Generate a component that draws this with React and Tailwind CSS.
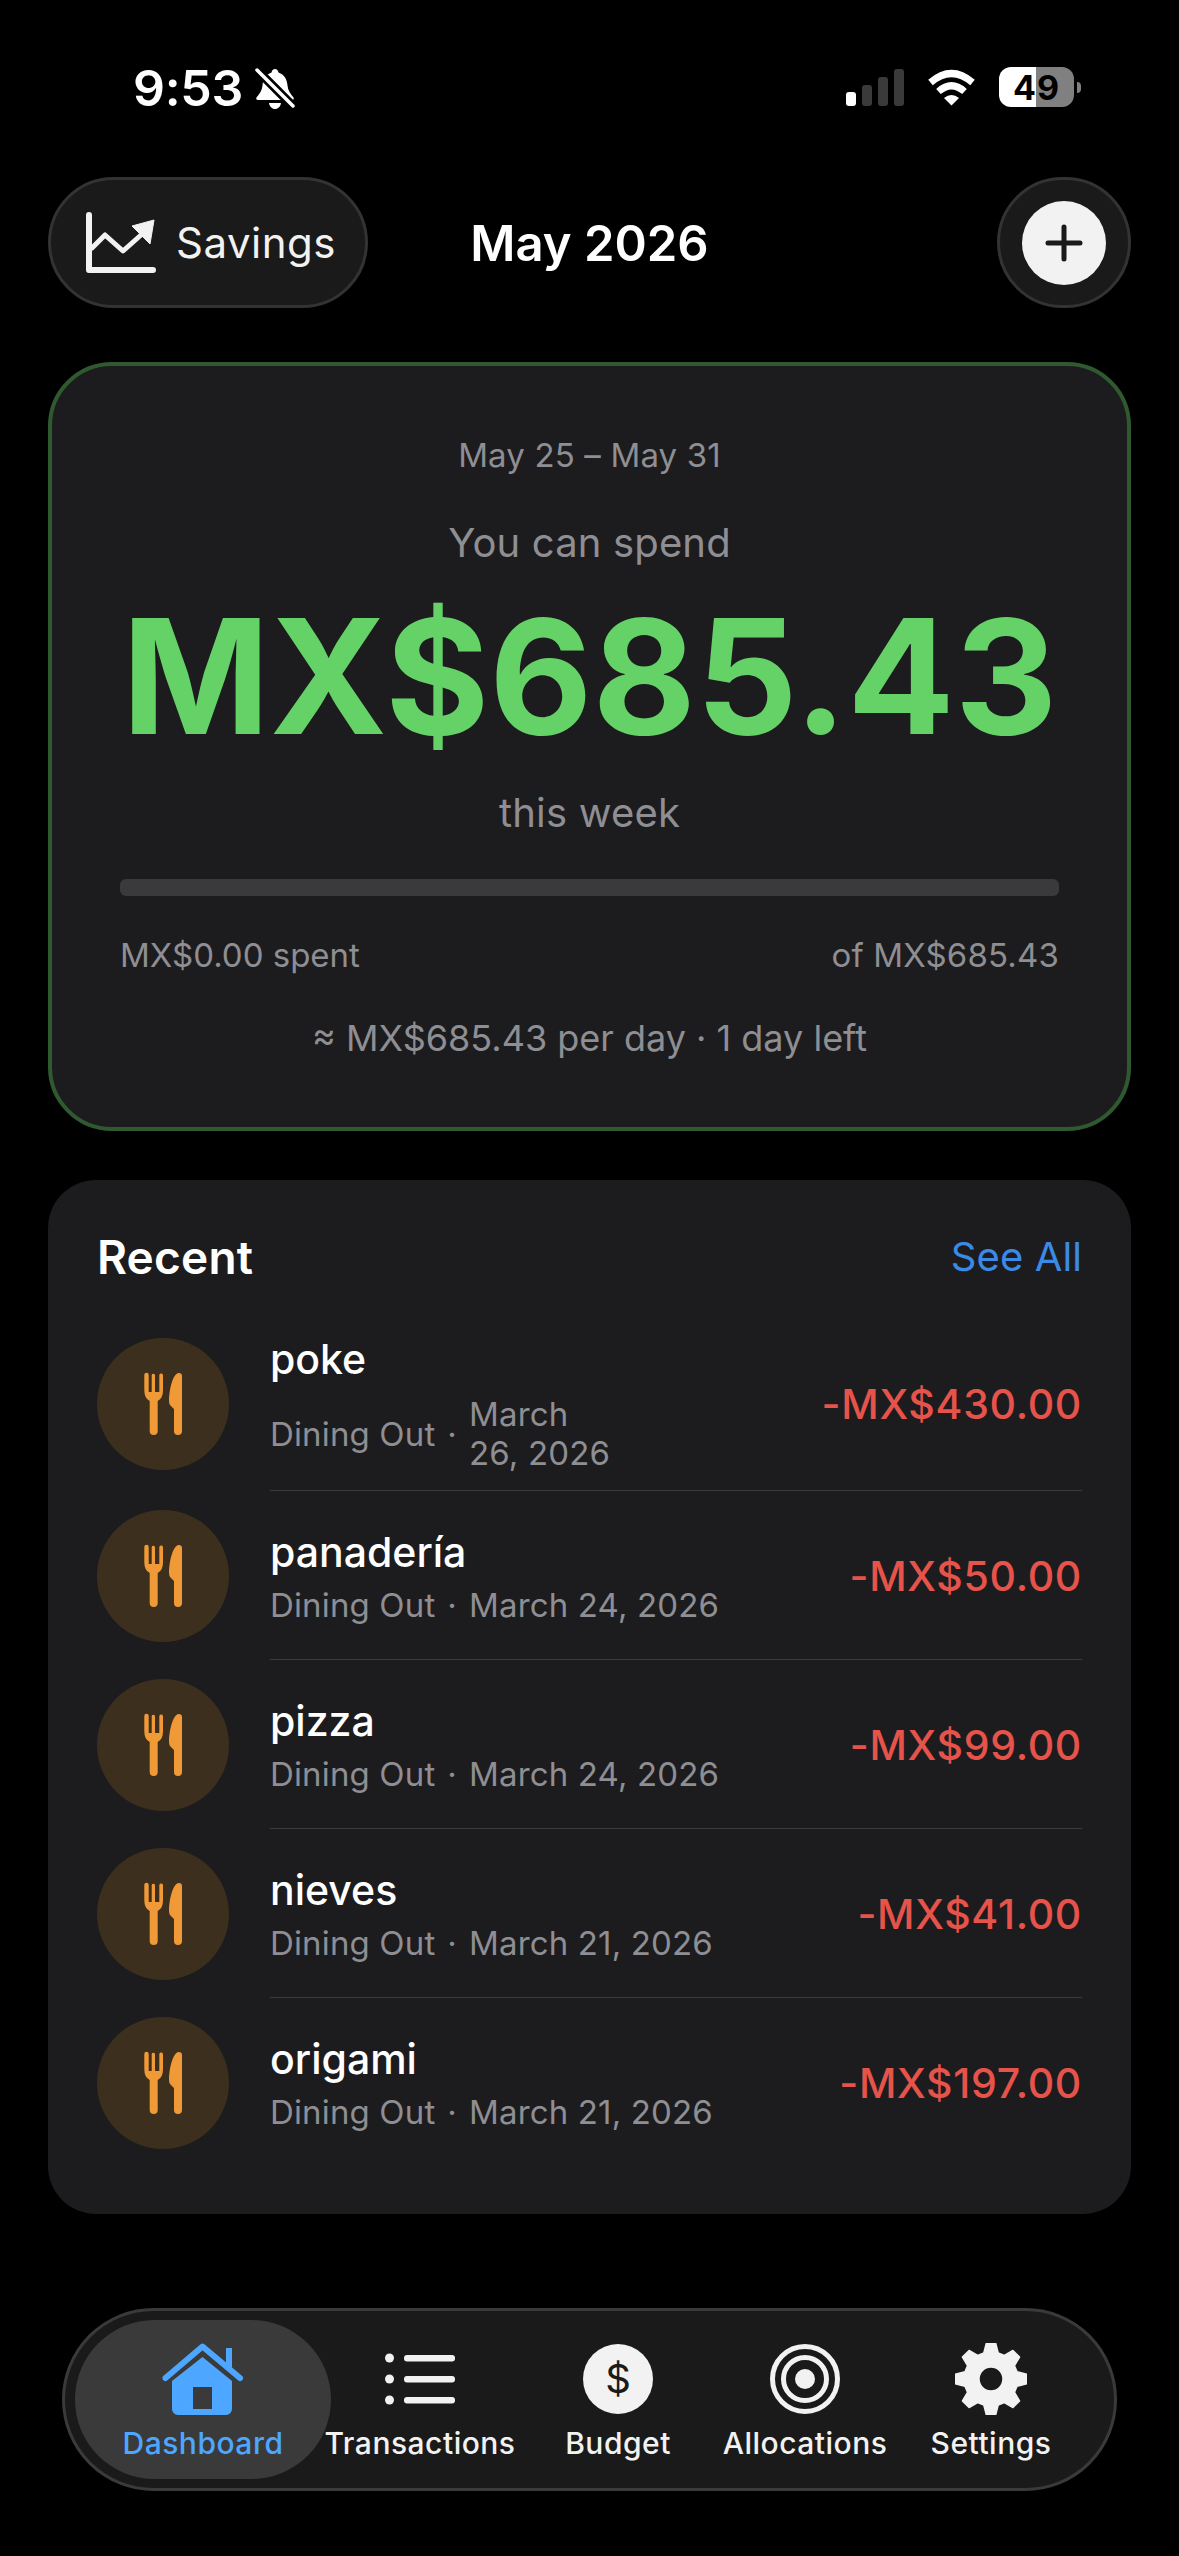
const ROWS = [
  { name: 'poke', date: ['March', '26, 2026'], amount: '-MX$430.00' },
  { name: 'panadería', date: ['March 24, 2026'], amount: '-MX$50.00' },
  { name: 'pizza', date: ['March 24, 2026'], amount: '-MX$99.00' },
  { name: 'nieves', date: ['March 21, 2026'], amount: '-MX$41.00' },
  { name: 'origami', date: ['March 21, 2026'], amount: '-MX$197.00' },
]

function Bell() {
  return (
    <svg width="40" height="42" viewBox="0 0 40 42" className="ml-[12px] mt-[1px]">
      <path d="M20 1c2 0 3 1.500 3.500 3.500 6 2 8.500 7 9 13 .4 5 3 8.500 6 12 .8 1.500 0 2.500-1.500 2.500H3c-1.500 0-2.300-1-1.500-2.500 3-3.500 5.600-7 6-12 .5-6 3-11 9-13C17 2.500 18 1 20 1z" fill="#fff" />
      <path d="M14 35h12c-.5 3.500-3 6-6 6s-5.500-2.500-6-6z" fill="#fff" />
      <path d="M3 3l35 35" stroke="#000" strokeWidth="9" />
      <path d="M2 2l36 36" stroke="#fff" strokeWidth="3.500" strokeLinecap="round" />
    </svg>
  )
}

function StatusBar() {
  return (
    <div className="flex h-[177px] items-start justify-between pl-[133px] pr-[98px] pt-[67px]">
      <div className="flex items-start">
        <span className="text-[50px] font-semibold leading-[42px] tracking-[-0.3px] text-white">9:53</span>
        <Bell />
      </div>
      <div className="flex items-center">
        <div className="flex h-[40px] items-end gap-[6px] pb-[1px]">
          <div className="h-[14px] w-[10px] rounded-[3px] bg-white" />
          <div className="h-[21px] w-[10px] rounded-[3px] bg-[#3a3a3a]" />
          <div className="h-[29px] w-[10px] rounded-[3px] bg-[#3a3a3a]" />
          <div className="h-[37px] w-[10px] rounded-[3px] bg-[#3a3a3a]" />
        </div>
        <svg width="49" height="38" viewBox="0 0 49 38" className="ml-[23px]">
          <path d="M3.500 14.500Q24.500 -3.500 45.500 14.500" fill="none" stroke="#fff" strokeWidth="7" />
          <path d="M11.500 23.500Q24.500 12 37.500 23.500" fill="none" stroke="#fff" strokeWidth="7" />
          <path d="M17 30Q24.500 24 32 30L24.500 37.500z" fill="#fff" />
        </svg>
        <div className="ml-[23px] flex h-[40px] w-[75px] items-center justify-center rounded-[12px] bg-[linear-gradient(90deg,#fff_49%,#808080_49%)] text-[34px] font-bold tracking-[1px] text-black">
          49
        </div>
        <div className="ml-[3px] h-[11px] w-[4px] rounded-r-full bg-[#808080]" />
      </div>
    </div>
  )
}

function SavingsIcon() {
  return (
    <svg width="70" height="62" viewBox="0 0 70 62">
      <path d="M3 3V58H67" fill="none" stroke="#f2f2f2" strokeWidth="6" strokeLinecap="round" strokeLinejoin="round" />
      <path d="M5 37L19 23L37 39L55 23" fill="none" stroke="#f2f2f2" strokeWidth="5" strokeLinejoin="round" />
      <path d="M68 8L46 14L64 32z" fill="#f2f2f2" stroke="#f2f2f2" strokeWidth="1" strokeLinejoin="round" />
    </svg>
  )
}

function Header() {
  return (
    <div className="mx-[48px] grid h-[131px] grid-cols-[1fr_auto_1fr] items-center">
      <div className="flex h-[131px] w-[320px] items-center gap-[20px] rounded-full border-[3px] border-[#333] bg-[#1a1a1a] pl-[35px]">
        <SavingsIcon />
        <span className="text-[42px] leading-none tracking-[0.5px] text-[#f2f2f2]">Savings</span>
      </div>
      <h1 className="mt-[2px] text-[49px] font-semibold leading-none text-white">May 2026</h1>
      <div className="flex justify-end">
        <div className="flex h-[131px] w-[134px] items-center justify-center rounded-full border-[3px] border-[#333] bg-[#1a1a1a]">
          <div className="flex h-[84px] w-[84px] items-center justify-center rounded-full bg-[#f2f2f2]">
            <svg width="38" height="38" viewBox="0 0 38 38">
              <path d="M19 3V35M3 19H35" stroke="#1a1a1a" strokeWidth="5" strokeLinecap="round" />
            </svg>
          </div>
        </div>
      </div>
    </div>
  )
}

function BudgetCard() {
  return (
    <div className="mx-[48px] mt-[54px] flex h-[769px] flex-col items-center rounded-[64px] border-[4px] border-[#2f5a30] bg-[#1c1c1e] px-[68px] pt-[69px] text-[#8e8e93]">
      <p className="text-[33px] leading-[40px] tracking-[0.15px]">May 25 – May 31</p>
      <p className="mt-[42px] text-[40px] leading-[52px] tracking-[0.15px]">You can spend</p>
      <p className="mt-[27px] whitespace-nowrap text-[159px] font-bold leading-[160px] text-[#65d268]">MX$685.43</p>
      <p className="mt-[31px] text-[40px] leading-[52px] tracking-[0.2px]">this week</p>
      <div className="mt-[40px] h-[17px] w-full rounded-[6px] bg-[#3a3a3c]" />
      <div className="mt-[39px] flex w-full justify-between text-[33px] leading-[40px]">
        <span>MX$0.00 spent</span>
        <span className="tracking-[0.15px]">of MX$685.43</span>
      </div>
      <p className="mt-[41px] text-[36px] leading-[44px]">≈ MX$685.43 per day · 1 day left</p>
    </div>
  )
}

function DiningIcon() {
  return (
    <svg width="132" height="132" viewBox="0 0 132 132" className="shrink-0">
      <circle cx="66" cy="66" r="66" fill="#3c2f1e" />
      <g fill="#f09a37">
        <path d="M47.300 37a2.200 2.200 0 0 1 4.400 0V54h3V37a1.700 1.700 0 0 1 3.300 0V54h4.300V37a1.900 1.900 0 0 1 3.700 0V52q0 8.500-5.300 11V93a4 4 0 0 1-8 0V63q-5.400-2.500-5.400-11z" />
        <path d="M81.500 35C84 35 85 36 85 38V93a4 4 0 0 1-8 0V71L73.500 67.500C72.500 66.500 72 65 72 62 72.500 50 76 36 81.500 35z" />
      </g>
    </svg>
  )
}

function Row({ row, last }) {
  const wrapped = row.date.length > 1
  return (
    <div className="flex items-center gap-[41px]">
      <DiningIcon />
      <div className={`flex flex-1 items-center justify-between ${wrapped ? 'h-[174px]' : 'h-[169px]'} ${last ? '' : 'border-b-[1.5px] border-[#3a3a3c]'}`}>
        <div className={wrapped ? 'pt-[2px]' : 'pt-[3px]'}>
          <p className="text-[41px] font-medium leading-[46px] text-white">{row.name}</p>
          <div className={`flex items-center text-[33px] leading-[39px] tracking-[0.15px] text-[#8e8e93] ${wrapped ? 'mt-[13px]' : 'mt-[11px]'}`}>
            <span>Dining Out</span>
            <span className="mx-[12px]">·</span>
            <div>
              {row.date.map((line) => (
                <p key={line}>{line}</p>
              ))}
            </div>
          </div>
        </div>
        <span className="pt-[2px] text-[41px] font-medium leading-none tracking-[0.7px] text-[#e5534b]">{row.amount}</span>
      </div>
    </div>
  )
}

function RecentCard() {
  return (
    <div className="mx-[48px] mt-[49px] h-[1034px] rounded-[48px] bg-[#1c1c1e] px-[49px] pt-[52px]">
      <div className="flex items-center justify-between">
        <h2 className="text-[46px] font-semibold leading-[50px] tracking-[0.2px] text-white">Recent</h2>
        <span className="text-[40px] leading-[50px] tracking-[0.1px] text-[#3b8ae6]">See All</span>
      </div>
      <div className="mt-[35px]">
        {ROWS.map((row, idx) => (
          <Row key={row.name} row={row} last={idx === ROWS.length - 1} />
        ))}
      </div>
    </div>
  )
}

function HomeIcon() {
  return (
    <svg width="82" height="72" viewBox="0 0 82 72">
      <path d="M64 5h6v22h-6z" fill="#4da6ff" />
      <path d="M3.500 35L40.500 3.500L78 35" fill="none" stroke="#4da6ff" strokeWidth="6" strokeLinecap="round" strokeLinejoin="round" />
      <path fillRule="evenodd" d="M40.500 14L70 38V66a6 6 0 0 1-6 6H16a6 6 0 0 1-6-6V38zM31 44V66H50V44z" fill="#4da6ff" />
    </svg>
  )
}

function ListIcon() {
  return (
    <svg width="70" height="52" viewBox="0 0 70 52">
      <g fill="#f2f2f2">
        <circle cx="4.500" cy="5" r="4.500" />
        <circle cx="4.500" cy="26" r="4.500" />
        <circle cx="4.500" cy="47" r="4.500" />
        <rect x="19" y="2" width="51" height="6.500" rx="3" />
        <rect x="19" y="23" width="51" height="6.500" rx="3" />
        <rect x="19" y="44" width="51" height="6.500" rx="3" />
      </g>
    </svg>
  )
}

function TargetIcon() {
  return (
    <svg width="70" height="70" viewBox="0 0 70 70">
      <circle cx="35" cy="35" r="32.500" fill="none" stroke="#f2f2f2" strokeWidth="5" />
      <circle cx="35" cy="35" r="21.500" fill="none" stroke="#f2f2f2" strokeWidth="5" />
      <circle cx="35" cy="35" r="10" fill="#f2f2f2" />
    </svg>
  )
}

// 8 teeth, built from polar points
function gearPath() {
  const pts = []
  for (let i = 0; i < 8; i++) {
    const a = (i * Math.PI) / 4 - Math.PI / 2
    const at = (r, d) => `${(36 + r * Math.cos(a + d)).toFixed(2)} ${(36 + r * Math.sin(a + d)).toFixed(2)}`
    pts.push(`${at(27, -0.27)}`, `${at(36, -0.13)}`, `${at(36, 0.13)}`, `${at(27, 0.27)}`)
  }
  return `M${pts.join('L')}z M36 24a12 12 0 1 0 0 24a12 12 0 1 0 0-24z`
}

function GearIcon() {
  return (
    <svg width="72" height="72" viewBox="0 0 72 72">
      <path d={gearPath()} fill="#f2f2f2" fillRule="evenodd" stroke="#f2f2f2" strokeWidth="1.500" strokeLinejoin="round" />
    </svg>
  )
}

function NavItem({ width, label, active, children }) {
  return (
    <div className={`flex h-[159px] shrink-0 flex-col items-center rounded-full pt-[23px] ${width} ${active ? 'bg-[#3a3a3a] text-[#4da6ff]' : 'text-[#f2f2f2]'}`}>
      <div className="flex h-[72px] items-center">{children}</div>
      <span className="mt-[8px] whitespace-nowrap text-[30px] font-medium leading-[40px] tracking-[0.5px]">{label}</span>
    </div>
  )
}

function BottomNav() {
  return (
    <div className="mx-[62px] mt-[94px] flex h-[183px] items-center rounded-full border-[3px] border-[#3a3a3a] bg-[#1a1a1a] px-[10px]">
      <NavItem width="w-[256px]" label="Dashboard" active>
        <HomeIcon />
      </NavItem>
      <NavItem width="w-[178px]" label="Transactions">
        <ListIcon />
      </NavItem>
      <NavItem width="w-[218px]" label="Budget">
        <div className="flex h-[70px] w-[70px] items-center justify-center rounded-full bg-[#f2f2f2] text-[40px] font-normal leading-none text-[#1a1a1a]">$</div>
      </NavItem>
      <NavItem width="w-[156px]" label="Allocations">
        <TargetIcon />
      </NavItem>
      <NavItem width="w-[216px]" label="Settings">
        <GearIcon />
      </NavItem>
    </div>
  )
}

export default function App() {
  return (
    <div className="h-[2556px] w-[1179px] overflow-hidden bg-black font-[Inter,sans-serif]">
      <StatusBar />
      <Header />
      <BudgetCard />
      <RecentCard />
      <BottomNav />
    </div>
  )
}
